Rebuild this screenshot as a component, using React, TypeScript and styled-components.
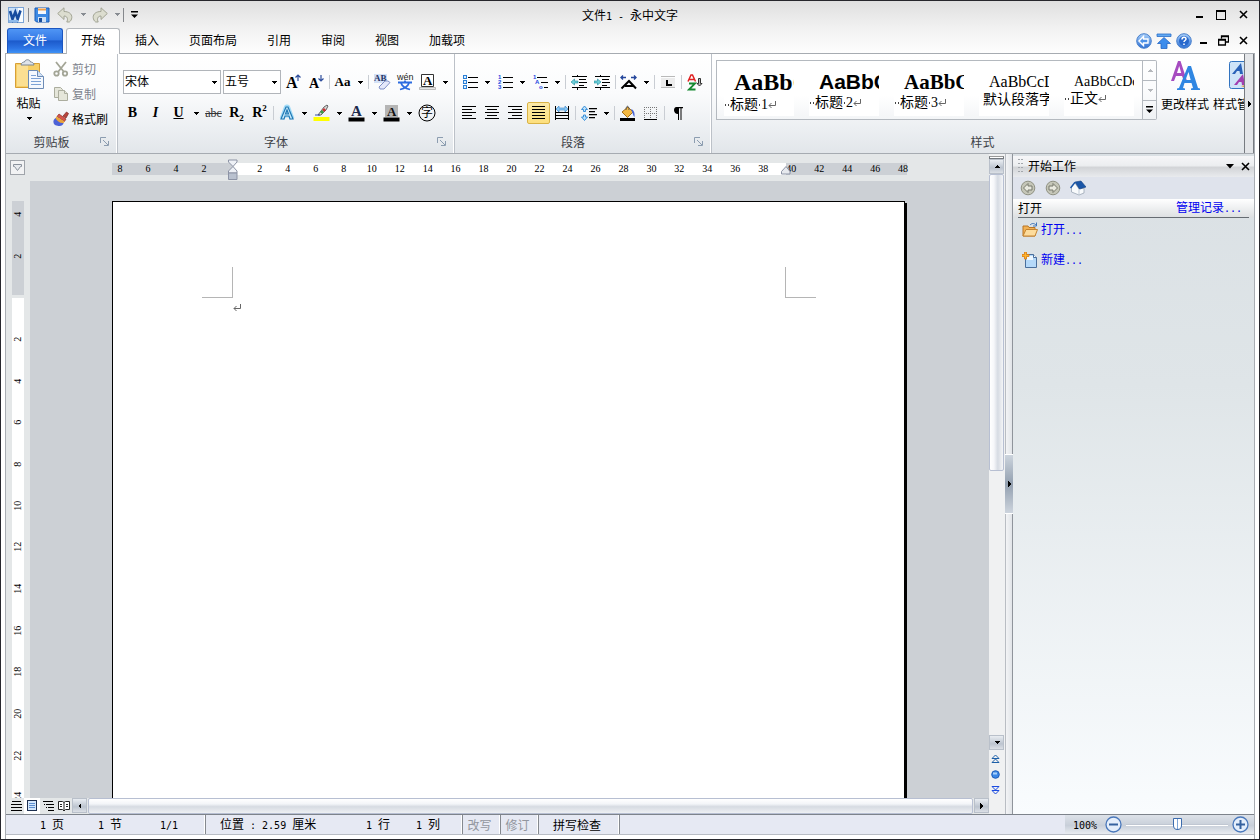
import React from "react";
import styled, { createGlobalStyle, css } from "styled-components";

const GlobalStyle = createGlobalStyle`
  *, *::before, *::after { box-sizing: border-box; }
  body { margin: 0; overflow: hidden; }
  body, button, select, input {
    font-family: "Noto Sans CJK SC", "Liberation Sans", sans-serif;
    font-size: 12px;
    line-height: 16px;
    color: #000;
  }
  button { background: none; border: 0; padding: 0; margin: 0; }
  svg { display: block; flex: none; }
`;

const serif = `"Liberation Serif", "Noto Sans CJK SC", serif`;

/* ---------- shared parts ---------- */

const Latin = styled.span`
  font-family: "DejaVu Sans Mono", monospace;
  font-size: 10px;
  white-space: pre;
`;

function Mixed({ text }: { text: string }) {
  return (
    <>
      {text.split(/([\x20-\x7e]+)/).map((run, i) => (i % 2 ? <Latin key={i}>{run}</Latin> : run))}
    </>
  );
}

const Frame = styled.div`
  display: flex;
  flex-direction: column;
  height: 100vh;
  border: 1px solid #26262c;
  background: linear-gradient(#dfdfdf 0, #f2f2f2 28px, #fefefe 52px, #fff 53px);
`;

const IconButton = styled.button<{ $w?: number; $h?: number }>`
  display: flex;
  align-items: center;
  justify-content: center;
  flex: none;
  width: ${(p) => p.$w ?? 20}px;
  height: ${(p) => p.$h ?? 20}px;
`;

function Caret({ fill = "#000", dir = "down" }: { fill?: string; dir?: "down" | "up" | "left" | "right" }) {
  const d = { down: "M0 1h6L3 4z", up: "M0 4h6L3 1z", left: "M4 0v6L1 3z", right: "M1 0v6l3-3z" }[dir];
  const vertical = dir === "down" || dir === "up";
  return (
    <svg width={vertical ? 6 : 5} height={vertical ? 5 : 6} shapeRendering="crispEdges">
      <path d={d} fill={fill} />
    </svg>
  );
}

const Cross = () => (
  <svg width="9" height="9" fill="none" stroke="#000" strokeWidth="1.6">
    <path d="M1 1l7 7M8 1L1 8" />
  </svg>
);
const Minimize = () => (
  <svg width="9" height="9">
    <path d="M1 6h7v2H1z" />
  </svg>
);

/* ---------- title bar ---------- */

const TitleBar = styled.header`
  display: grid;
  grid-template-columns: 1fr auto 1fr;
  align-items: center;
  height: 27px;
  flex: none;
  padding: 0 5px;
`;
const QuickAccess = styled.div`
  display: flex;
  align-items: center;
`;
const QuickSep = styled.span`
  width: 1px;
  height: 14px;
  margin: 0 4px 0 2px;
  background: #85888c;
`;
const WindowTitle = styled.h1`
  margin: 0;
  padding-top: 2px;
  font-size: 12px;
  font-weight: 400;
`;
const WindowButtons = styled.div`
  display: flex;
  align-items: center;
  justify-content: flex-end;
  margin-left: auto;
`;

const WordLogo = () => (
  <svg width="16" height="16">
    <rect x=".5" y=".5" width="15" height="15" fill="#c9e0f8" stroke="#7ba4d6" />
    <path d="M10 1h5v14h-5z" fill="#f8fcff" />
    <path d="M2 4l2.500 8 2.800-7 2.400 7L12.500 3.500" fill="none" stroke="#164c9f" strokeWidth="2.600" />
    <path d="M1 13h9v2H1z" fill="#8fbaea" />
  </svg>
);
const SaveIcon = () => (
  <svg width="16" height="16">
    <path d="M1 1h14v14H2.500L1 13.500z" fill="#3d8ae4" stroke="#1b5bb4" />
    <path d="M4 1h8v6H4z" fill="#f4f8fd" />
    <path d="M4 1.500h8v2H4z" fill="#f0a04a" />
    <path d="M4 10h8v5H4z" fill="#cfe0f4" />
    <path d="M5 11h3v4H5z" fill="#1b4f9c" />
  </svg>
);
const UndoIcon = ({ flip }: { flip?: boolean }) => (
  <svg width="16" height="16">
    <path
      transform={flip ? "translate(16 0) scale(-1 1)" : undefined}
      d="M.7 6.500L7 .8V4.500c5 0 8 2.500 7.800 6-.2 2-1 3.500-2.500 4.500h-2.500c1.500-3 .5-6-2.800-6v3.500z"
      fill="#dcddcf"
      stroke="#a2a494"
    />
  </svg>
);
const CustomizeIcon = () => (
  <svg width="9" height="8">
    <path d="M1 0h7v1.500H1zM1 3.500h7L4.500 7z" />
  </svg>
);

/* ---------- tabs ---------- */

const TabRow = styled.nav`
  display: flex;
  height: 25px;
  flex: none;
  padding: 0 6px;
`;
const Tab = styled.button<{ $active?: boolean }>`
  height: 26px;
  padding: 0 15px 3px;
  white-space: nowrap;
  ${(p) =>
    p.$active &&
    css`
      position: relative;
      z-index: 1;
      padding: 0 14px 3px;
      border: 1px solid #b4b8bd;
      border-bottom: 0;
      border-radius: 3px 3px 0 0;
      background: #fff;
    `}
`;
const FileTab = styled.button`
  width: 56px;
  height: 25px;
  margin-right: 3px;
  padding-bottom: 2px;
  color: #fff;
  border: 1px solid #1c56c0;
  border-bottom: 0;
  border-radius: 3px 3px 0 0;
  background: linear-gradient(#4f95f4, #3479e6 45%, #1c5acb 50%, #2c74e4 80%, #3f92f6);
`;
const TabTools = styled(WindowButtons)`
  height: 25px;
`;

const BlueDisc = ({ children }: { children: React.ReactNode }) => (
  <svg width="16" height="16">
    <defs>
      <linearGradient id="disc" x2="0" y2="1">
        <stop stopColor="#a9d0fa" />
        <stop offset="1" stopColor="#2c6fd4" />
      </linearGradient>
    </defs>
    <circle cx="8" cy="8" r="7.300" fill="url(#disc)" stroke="#4a80cc" />
    {children}
  </svg>
);
const BackGlyph = () => <path d="M3 8l4.500-4.500V6H12v4H7.500v2.500z" fill="#4d92e8" stroke="#fff" strokeWidth="1.400" />;

/* ---------- ribbon ---------- */

const Workspace = styled.div`
  display: flex;
  flex-direction: column;
  flex: 1;
  min-height: 0;
  margin: 0 4px;
  border: solid #a9adb3;
  border-width: 0 1px;
`;
const Ribbon = styled.section`
  display: flex;
  flex: none;
  height: 101px;
  border: solid #a6abb1;
  border-width: 1px 0;
  background: linear-gradient(#fff, #fafbfc 40%, #eceff2 75%, #e2e6ea);
`;
const RibbonGroups = styled.div`
  display: flex;
  flex: 1;
  min-width: 0;
  overflow: hidden;
`;
const Group = styled.section<{ $w: number; $grow?: boolean }>`
  display: grid;
  grid-template-rows: 1fr 20px;
  flex: ${(p) => (p.$grow ? 1 : 0)} 0 ${(p) => p.$w}px;
  border-right: 1px solid #bcc1c8;
  box-shadow: inset -1px 0 #fff;
`;
const GroupFooter = styled.div`
  display: grid;
  grid-template-columns: 1fr 20px;
  align-items: center;
  text-align: center;
  color: #3d4147;
  padding-bottom: 3px;
`;

const Launcher = () => (
  <IconButton aria-label="更多选项" $w={14} $h={14}>
    <svg width="9" height="9" fill="none" stroke="#8c9db0">
      <path d="M.5 6V.5H6M3 3l5 5M8.500 4v4.500H4" />
    </svg>
  </IconButton>
);

const Clipboard = styled.div`
  display: flex;
  padding: 5px 0 0 7px;
`;
const TallButton = styled.button<{ $w: number }>`
  display: flex;
  flex-direction: column;
  align-items: center;
  flex: none;
  gap: 5px;
  width: ${(p) => p.$w}px;
  height: 66px;
  white-space: nowrap;
`;
const SmallList = styled.div`
  display: flex;
  flex-direction: column;
  gap: 5px;
  margin-left: 9px;
`;
const SmallButton = styled.button`
  display: flex;
  align-items: center;
  gap: 3px;
  height: 20px;
  padding-bottom: 1px;
  white-space: nowrap;
  &:disabled { color: #7d838c; }
`;

const PasteIcon = () => (
  <svg width="30" height="31">
    <path d="M1.500 4.500h24v24h-24z" fill="#f7cf66" stroke="#d79f36" />
    <path d="M3 6h11v21H3z" fill="#fbdf92" />
    <path d="M7 6c0-2 2-3 3.500-3 .5-3 5.500-3 6 0C18 3 20 4 20 6z" fill="#dfe4ea" stroke="#7d8794" />
    <path d="M14.500 11.500h9l6 6v12h-15z" fill="#f5f9fe" stroke="#6d8cb6" />
    <path d="M23.500 11.500v6h6" fill="#d2e2f5" stroke="#6d8cb6" />
    <path d="M17 16.500h5M17 19.500h10M17 22.500h10M17 25.500h10" stroke="#7da3d6" />
  </svg>
);
const CutIcon = () => (
  <svg width="16" height="16" fill="none" stroke="#a3a596" strokeWidth="1.800">
    <path d="M3 1l8 10M13 1L5 11" />
    <circle cx="3.500" cy="12.500" r="2.200" />
    <circle cx="12" cy="12.500" r="2.200" />
  </svg>
);
const CopyIcon = () => (
  <svg width="16" height="16" fill="#e5e6da" stroke="#abad9e">
    <path d="M1.500 1.500h6l2 2v8h-8z" />
    <path d="M5.500 4.500h6l3 3v7h-9z" />
    <path d="M11.500 4.500v3h3" />
  </svg>
);
const BrushIcon = () => (
  <svg width="16" height="16">
    <path d="M10 5l3.500-4 2 1.500L13 7z" fill="#b8443c" stroke="#7d2622" strokeWidth=".7" />
    <path d="M6 3l7 5-1.500 2.500L4 5.500z" fill="#d8554a" stroke="#8c2f28" strokeWidth=".7" />
    <path d="M3.500 5.500l8 5c-1 2.500-3 3-5 2.500L2 8z" fill="#e9a33c" />
    <path d="M2.500 7C1 8.500 0 9.500.5 11.500.5 14 4 15 6.500 15c2.500 0 4-1.500 4-3C7 12.500 4 10 2.500 7z" fill="#4d62d6" />
  </svg>
);

const ToolRows = styled.div`
  display: flex;
  flex-direction: column;
  gap: 7px;
  padding: 16px 0 0 3px;
`;
const ToolRow = styled.div`
  display: flex;
  align-items: center;
  height: 24px;
`;
const Tool = styled.button<{ $on?: boolean }>`
  display: flex;
  align-items: center;
  justify-content: center;
  flex: none;
  width: 23px;
  height: 22px;
  font: 700 16px/20px ${serif};
  ${(p) =>
    p.$on &&
    css`
      border: 1px solid #d9b347;
      border-radius: 2px;
      background: linear-gradient(#fbe9a8, #fddf7d);
    `}
`;
const Glyph = styled.span<{ $size?: number; $italic?: boolean; $line?: string }>`
  font-size: ${(p) => p.$size ?? 16}px;
  font-style: ${(p) => (p.$italic ? "italic" : "normal")};
  text-decoration: ${(p) => p.$line ?? "none"};
  sub, sup { font-size: 9px; line-height: 0; }
`;
const Struck = styled(Glyph)`
  color: #333;
  font-weight: 400;
`;
const DropArrow = styled.button`
  display: flex;
  align-items: center;
  justify-content: center;
  flex: none;
  width: 12px;
  height: 22px;
`;
const ToolSep = styled.span`
  width: 1px;
  height: 14px;
  margin: 0 1px 0 2px;
  background: #c9cdd3;
`;
const Drop = () => (
  <DropArrow aria-label="下拉">
    <Caret />
  </DropArrow>
);

const Combos = styled.div`
  display: flex;
  gap: 2px;
  margin-left: 2px;
`;
const ComboBox = styled.label<{ $w: number }>`
  position: relative;
  width: ${(p) => p.$w}px;
  svg {
    position: absolute;
    right: 4px;
    top: 10px;
    pointer-events: none;
  }
`;
const Select = styled.select`
  width: 100%;
  height: 24px;
  padding: 0 1px 2px;
  border: 1px solid #b1b5ba;
  border-radius: 0;
  background: #fff;
  appearance: none;
`;

const GrowIcon = ({ down }: { down?: boolean }) => (
  <svg width="17" height="18">
    <text x="2" y="15" fontFamily="Liberation Serif, serif" fontWeight="700" fontSize={down ? 14 : 16}>A</text>
    <path d={down ? "M14 2v6M11.500 5.500L14 8l2.500-2.500" : "M14 8V2M11.500 4.500L14 2l2.500 2.500"} fill="none" stroke="#2e4d9c" strokeWidth="1.200" />
  </svg>
);
const ClearIcon = () => (
  <svg width="18" height="18">
    <path d="M1 1h13v9H1z" fill="#d4e1f6" />
    <text x="1" y="8" fontFamily="Liberation Serif, serif" fontWeight="700" fontSize="9" fill="#1f3566">AB</text>
    <path d="M6 14l6-6h3l2 1.500-6 6.500H7z" fill="#e4e8fa" stroke="#7f8fc6" />
  </svg>
);
const PinyinIcon = () => (
  <svg width="18" height="18">
    <text x="1" y="7" fontFamily="Liberation Sans, sans-serif" fontWeight="400" fontSize="9" fill="#222">wén</text>
    <path d="M2 9.500h14M9 7.500v2M5 10c1 3 5 5.500 9 6.500M13 10c-1 3-5 5.500-9 6.500" fill="none" stroke="#2b6be0" strokeWidth="1.800" />
  </svg>
);
const CharBorderIcon = () => (
  <svg width="17" height="18">
    <path d="M2.500 1.500h12v12h-12z" fill="#fff" stroke="#333" />
    <text x="4" y="12" fontFamily="Liberation Serif, serif" fontWeight="700" fontSize="13">A</text>
    <path d="M.5 14.500h16v2H.5z" fill="#e6e6e6" stroke="#999" strokeWidth=".6" />
  </svg>
);
const EffectIcon = () => (
  <svg width="18" height="18" fill="none">
    <path d="M4 15L8.500 3h1L14 15M6 11h6" stroke="#a3dcf8" strokeWidth="5" strokeLinejoin="round" />
    <path d="M3 15L8 3h2l5 12h-3l-1-3H7l-1 3zM7.500 10h3L9 6z" fill="#c8ebfb" stroke="#2078b4" strokeWidth="1.200" />
  </svg>
);
const HighlightIcon = () => (
  <svg width="17" height="18">
    <path d="M5 11l6-8 3-2 1 1-2 4-5 5z" fill="#d8d8d8" stroke="#444" strokeWidth=".8" />
    <path d="M9 6l2-2 2 2-2 2z" fill="#c33" />
    <path d="M7 8l2-2 2 2-2 2z" fill="#3a9c4a" />
    <path d="M2 11h5" stroke="#3551a8" />
    <path d="M.5 13h16v4H.5z" fill="#ff0" />
  </svg>
);
const FontColorIcon = ({ shade }: { shade?: boolean }) => (
  <svg width="17" height="18">
    {shade && <path d="M2 1h13v12H2z" fill="#b5b5b5" />}
    <text x={shade ? 4 : 3} y="12" fontFamily="Liberation Serif, serif" fontWeight="700" fontSize={shade ? 13 : 15} fill={shade ? "#111" : "#1c2a4c"}>A</text>
    <path d="M.5 13.500h16v4H.5z" />
  </svg>
);
const EncloseIcon = () => (
  <svg width="18" height="18">
    <circle cx="9" cy="9" r="8" fill="none" stroke="#000" />
    <text x="3" y="13" fontFamily="Noto Sans CJK SC, sans-serif" fontWeight="400" fontSize="12">字</text>
  </svg>
);

const BulletsIcon = () => (
  <svg width="16" height="16" shapeRendering="crispEdges">
    <path d="M1.500 1.500h3v3h-3zM1.500 6.500h3v3h-3zM1.500 11.500h3v3h-3z" fill="#dff0ff" stroke="#2a7fd6" />
    <path d="M6 3.500h10M6 8.500h10M6 13.500h10" stroke="#000" />
  </svg>
);
const NumbersIcon = () => (
  <svg width="16" height="16">
    <g fontFamily="Liberation Sans, sans-serif" fontSize="6" fontWeight="700" fill="#1845e0">
      <text x="1" y="5">1</text>
      <text x="1" y="10">2</text>
      <text x="1" y="15">3</text>
    </g>
    <path d="M6 3.500h10M6 8.500h10M6 13.500h10" stroke="#000" shapeRendering="crispEdges" />
  </svg>
);
const MultiLevelIcon = () => (
  <svg width="16" height="16">
    <g fontFamily="Liberation Sans, sans-serif" fontSize="6" fontWeight="700" fill="#1845e0">
      <text x="1" y="5">1</text>
      <text x="3" y="10">A</text>
      <text x="7" y="15">o</text>
    </g>
    <path d="M5 3.500h10M9 8.500h7M12 13.500h4" stroke="#000" shapeRendering="crispEdges" />
  </svg>
);
const IndentIcon = ({ inward }: { inward?: boolean }) => (
  <svg width="16" height="16" shapeRendering="crispEdges">
    <path d="M1 2.500h15M8 5.500h7M8 8.500h8M8 11.500h5M1 13.500h15M6.500 1v2M6.500 13v3" stroke="#000" fill="none" />
    <path d={inward ? "M7 8L3.500 5v2H0v2h3.500v2z" : "M0 8l3.500-3v2H7v2H3.500v2z"} fill="#6fd0da" stroke="#1b8a9c" strokeWidth=".6" shapeRendering="auto" />
  </svg>
);
const ScaleIcon = () => (
  <svg width="17" height="16" fill="none">
    <path d="M1.500 14.500L9 7l7 7.500M5 12h8" stroke="#000" strokeWidth="2" />
    <path d="M1 3.500h5M3 1.500L1 3.500l2 2M16 3.500h-5M14 1.500l2 2-2 2" stroke="#26479c" strokeWidth="1.400" />
  </svg>
);
const TabStopIcon = () => (
  <svg width="16" height="16">
    <path d="M1 4h14v9H1z" fill="#ececec" />
    <path d="M1 2.500h14M1 13.500h14" stroke="#b9b9b9" />
    <path d="M6 6h2v4h4v2H6z" />
  </svg>
);
const SortIcon = () => (
  <svg width="16" height="17" fill="none">
    <path d="M1 7.500L4 1h1.500l3 6.500M2.500 5.500H7" stroke="#e02020" strokeWidth="1.500" />
    <path d="M2 9.500h6L2 15.500h6.500" stroke="#178a32" strokeWidth="1.800" />
    <path d="M11.500 4.500h2v5H15L12.500 12 10 9.500h1.500z" fill="#bbb" stroke="#333" />
  </svg>
);
const AlignIcon = ({ lines }: { lines: [number, number][] }) => (
  <svg width="15" height="16" shapeRendering="crispEdges">
    {lines.map(([x, w], i) => (
      <path key={i} d={`M${x} ${i * 3 + 1}h${w}v1h-${w}z`} />
    ))}
  </svg>
);
const DistributeIcon = () => (
  <svg width="16" height="16" shapeRendering="crispEdges">
    <path d="M1 1h1v14H1zM14 1h1v14h-1z" />
    <path d="M2 7h12v1H2zM2 10h12v1H2zM2 13h12v1H2z" />
    <path d="M2 4l3-3v2h6V1l3 3-3 3V5H5v2z" fill="#8cc9f5" stroke="#2d7fc9" strokeWidth=".6" shapeRendering="auto" />
  </svg>
);
const SpacingIcon = () => (
  <svg width="16" height="16">
    <path d="M3.500 1L6.500 4.500h-2v2h-2v-2h-2zM3.500 15.500L.5 12h2V10h2v2h2z" fill="#bfe3fb" stroke="#2a87d6" strokeWidth=".9" />
    <path d="M8 3h8v1.300H8zM8 6h6v1.300H8zM8 9h8v1.300H8zM8 12h6v1.300H8z" />
  </svg>
);
const BucketIcon = () => (
  <svg width="16" height="17">
    <path d="M2 7l6-5 5 5-5.500 5.500z" fill="#f4b942" stroke="#a6701a" />
    <path d="M6 5c0-5 3-5 3 0" fill="none" stroke="#555" />
    <path d="M11 4c3 1 4 4 3.500 8-1-1-1.500-2.500-2-4z" fill="#4a68d8" />
    <path d="M0 13h15v3H0z" />
  </svg>
);
const BordersIcon = () => (
  <svg width="15" height="15" shapeRendering="crispEdges" fill="none" stroke="#777">
    <path strokeDasharray="1 1" d="M1 1.500h13M1 7.500h13M1.500 1v12M7.500 1v12M13.500 1v12" />
    <path d="M1 13.500h13" stroke="#000" />
  </svg>
);
const PilcrowIcon = () => (
  <svg width="12" height="15">
    <path d="M4.500 1H11v1.300H9.500V14H8.500V2.300H7V14H6V8C1 8 1 1 4.500 1z" />
  </svg>
);

const StylesBody = styled.div`
  display: flex;
  padding: 6px 0 0 4px;
`;
const Gallery = styled.div`
  display: flex;
  gap: 15px;
  flex: 1 0 427px;
  height: 60px;
  padding: 0 8px 3px 7px;
  border: 1px solid #b4b9bf;
  background: linear-gradient(#fff 60%, #f3f5f7);
`;
const StyleCard = styled.button`
  display: flex;
  flex-direction: column;
  justify-content: flex-start;
  width: 70px;
  flex: none;
  overflow: hidden;
  text-align: left;
  white-space: nowrap;
  background: #fff;
`;
const Sample = styled.span<{ $size: number; $h: number; $sans?: boolean; $bold?: boolean }>`
  display: block;
  flex: none;
  height: ${(p) => p.$h}px;
  padding-left: 10px;
  font-family: ${(p) => (p.$sans ? `"Liberation Sans", sans-serif` : serif)};
  font-size: ${(p) => p.$size}px;
  font-weight: ${(p) => (p.$bold ? 700 : 400)};
  line-height: 42px;
`;
const StyleName = styled.span`
  display: flex;
  align-items: center;
  flex: none;
  height: 16px;
  font: 14px/16px ${serif};
`;
const Dot = styled.i`
  width: 1px;
  height: 2px;
  margin: 0 1px;
  background: #444;
`;
const GalleryScroll = styled.div`
  display: grid;
  grid-template-rows: repeat(3, 1fr);
  width: 14px;
  flex: none;
  height: 60px;
  border: 1px solid #b4b9bf;
  border-left: 0;
  border-radius: 0 2px 2px 0;
`;
const GalleryStep = styled.button`
  display: grid;
  place-items: center;
  & + & { border-top: 1px solid #b4b9bf; }
`;
const RibbonScroller = styled.button`
  display: flex;
  align-items: center;
  justify-content: center;
  width: 10px;
  border: 1px solid #777b81;
  border-width: 0 1px;
  background: #e4e6e9;
`;

const ReturnMark = () => (
  <svg width="8" height="8" fill="none" stroke="#666">
    <path d="M7.500 0v4.500H1M3.500 2L1 4.500 3.500 7" />
  </svg>
);
const ChangeStylesIcon = () => (
  <svg width="31" height="31">
    <path d="M1 21h3l2-5h6l2 5h3L10.500 1H8zM7 13l2.200-7 2 7z" fill="#a64cc0" />
    <path d="M7 30v-1.500l2-.5L18 6h3l7 22 2 .5V30h-9v-1.500l2-.5-1.500-5h-7L13 28l2 .5V30zM15.500 20h5.200L18.500 12z" fill="#2f86e2" />
  </svg>
);
const StyleManagerIcon = () => (
  <svg width="28" height="31">
    <rect x=".5" y="1.500" width="27" height="27" rx="2" fill="#cfe4f8" stroke="#3173c0" />
    <path d="M3 14L12 3l2 11h-3l-.5-3H8l-2 3z" fill="#2a62b8" />
    <path d="M5 25l9-11 2 11h-3l-.5-3H10l-2 3z" fill="#a240b0" />
    <path d="M12 26l9-2-2 5z" fill="#e39a4c" />
  </svg>
);

/* ---------- editor ---------- */

const Body = styled.main`
  display: flex;
  flex: 1;
  min-height: 0;
`;
const Editor = styled.section`
  display: grid;
  grid-template-rows: 27px minmax(0, 1fr) 16px;
  flex: 1;
  min-width: 0;
  background: #e4e7e8;
`;
const RulerRow = styled.div`
  display: grid;
  grid-template-columns: 24px 1fr;
  align-items: center;
`;
const RulerCorner = styled.button`
  display: grid;
  place-items: center;
  width: 15px;
  height: 15px;
  margin-left: 4px;
  border: 1px solid #9fa4aa;
  background: #f2f3f4;
`;
const Ruler = styled.div`
  position: relative;
  width: 795px;
  height: 12px;
  margin: 2px auto 0;
  background: linear-gradient(90deg, #ccd0d5 121px, #fff 121px, #fff 674px, #ccd0d5 674px);
`;
const RulerTicks = styled.div`
  display: flex;
  margin: 0 -10px 0 -6px;
  font: 10px/12px "Liberation Serif", serif;
  text-align: center;
  span { flex: 1; }
`;
const RulerMarker = styled.svg<{ $x: number; $y: number }>`
  position: absolute;
  left: ${(p) => p.$x}px;
  top: ${(p) => p.$y}px;
`;
const PageRow = styled.div`
  display: grid;
  grid-template-columns: 24px 1fr;
  grid-template-rows: minmax(0, 1fr);
  min-height: 0;
`;
const VerticalRuler = styled.div`
  width: 12px;
  margin-left: 6px;
  padding-top: 12px;
  overflow: hidden;
  background: linear-gradient(#e4e7e8 20px, #ccd0d5 20px, #ccd0d5 114px, #e4e7e8 114px, #e4e7e8 117px, #fff 117px);
`;
const VerticalTicks = styled.div`
  display: flex;
  flex-direction: column;
  height: 625px;
  span {
    display: flex;
    align-items: center;
    justify-content: center;
    flex: 1;
    writing-mode: vertical-rl;
    rotate: 180deg;
    font: 10px/12px "Liberation Serif", serif;
  }
`;
const Canvas = styled.div`
  display: flex;
  justify-content: center;
  overflow: hidden;
  background: #ccd0d5;
`;
const Page = styled.article`
  flex: none;
  width: 793px;
  height: 1123px;
  margin: 20px 2px 0 0;
  padding: 65px 88px 0 89px;
  border: 1px solid #000;
  background: #fff;
  box-shadow: 2px 2px #000;
`;
const CropMarks = styled.div`
  display: flex;
  justify-content: space-between;
`;
const CropMark = styled.i<{ $right?: boolean }>`
  width: 31px;
  height: 31px;
  border-bottom: 1px solid #b5b5b5;
  border-left: ${(p) => (p.$right ? "1px solid #b5b5b5" : "0")};
  border-right: ${(p) => (p.$right ? "0" : "1px solid #b5b5b5")};
`;
const Paragraph = styled.p`
  margin: 6px 31px 0;
`;

const BottomRow = styled.div`
  display: flex;
  align-items: stretch;
  min-width: 0;
`;
const ViewButtons = styled.div`
  display: flex;
  padding-left: 2px;
`;
const ViewButton = styled.button<{ $on?: boolean }>`
  display: grid;
  place-items: center;
  width: 16px;
  height: 16px;
  background: ${(p) => (p.$on ? "#fff" : "none")};
`;
const BarButton = styled.button`
  display: grid;
  place-items: center;
  flex: none;
  width: 15px;
  height: 15px;
  border: 1px solid #b9c0ca;
  background: linear-gradient(#e9edf2, #bcc4cf 60%, #dce0e6);
`;
const HorizontalThumb = styled.div`
  flex: 1;
  margin: 0 1px;
  border: 1px solid #b7bfd2;
  border-radius: 2px;
  background: linear-gradient(#fff, #f3f5f8 35%, #d6dbe2 55%, #eef0f3);
`;
const VerticalBar = styled.div`
  display: flex;
  flex-direction: column;
  width: 16px;
  flex: none;
  padding: 2px 1px 16px 0;
  background: #f0f1f2;
`;
const SplitHandle = styled.div`
  height: 3px;
  border: 1px solid #74797f;
  border-top-color: #999;
  background: #fff;
`;
const VerticalThumb = styled.div`
  flex: 296 0 0;
  border: 1px solid #b7bfd2;
  border-radius: 2px;
  background: linear-gradient(90deg, #fff, #f6f7fa 30%, #d6dbe3 60%, #f4f5f7);
`;
const VerticalTrack = styled.div`
  flex: 264 0 0;
`;
const BrowseButton = styled.button`
  display: grid;
  place-items: center;
  width: 13px;
  height: 16px;
`;

/* ---------- task pane ---------- */

const Splitter = styled.div`
  display: flex;
  align-items: center;
  width: 8px;
  flex: none;
  background: linear-gradient(90deg, #b9bdc3 1px, #f3f4f6 1px, #e1e4e8 7px, #8f949b 7px);
`;
const SplitterGrip = styled.button`
  display: grid;
  place-items: center;
  width: 8px;
  height: 60px;
  border: solid #fff;
  border-width: 1px 0;
  background: linear-gradient(#ccd4dd, #93a0b0 50%, #cdd4dd);
`;
const Pane = styled.aside`
  display: flex;
  flex-direction: column;
  flex: 0 0 241px;
  padding-top: 2px;
  background: linear-gradient(#dae0e4, #dfe5e8 35%, #f9fcfe);
`;
const PaneTitle = styled.header`
  display: flex;
  align-items: center;
  height: 21px;
  padding: 0 2px 1px 4px;
  background: linear-gradient(#f6f6f8, #eceef0 45%, #d2d4d7 55%, #e9ebee);
`;
const PaneHeading = styled.h2`
  flex: 1;
  margin: 0 0 0 5px;
  padding-bottom: 1px;
  font-size: 12px;
  font-weight: 400;
`;
const PaneTools = styled.div`
  display: flex;
  align-items: center;
  gap: 9px;
  height: 22px;
  padding-left: 7px;
  background: #dfe3ec;
`;
const PaneSection = styled.div`
  display: flex;
  justify-content: space-between;
  align-items: center;
  height: 19px;
  margin-right: 5px;
  padding: 0 7px 0 0;
  border-bottom: 1px solid #666c72;
`;
const PaneSectionBack = styled.div`
  padding-left: 5px;
  background: linear-gradient(#fff, #dcdfe1);
`;
const PaneLink = styled.a`
  display: flex;
  align-items: center;
  gap: 3px;
  height: 18px;
  color: #0000f0;
  text-decoration: none;
`;
const PaneLinks = styled.div`
  display: flex;
  flex-direction: column;
  gap: 12px;
  padding: 3px 0 0 9px;
`;

const GripDots = () => (
  <svg width="6" height="16" fill="#a3a7ac">
    {[1, 5, 9, 13].map((y) => (
      <path key={y} d={`M1 ${y}h2v1H1zM4 ${y}h2v1H4z`} />
    ))}
  </svg>
);
const GreyDisc = ({ flip }: { flip?: boolean }) => (
  <svg width="16" height="16">
    <circle cx="8" cy="8" r="6.800" fill="#c5c6b8" stroke="#909284" />
    <path transform={flip ? "translate(16 0) scale(-1 1)" : undefined} d="M3.500 8L8 3.500V6h4v4H8v2.500z" fill="#e9e9df" stroke="#77796c" />
  </svg>
);
const HomeIcon = () => (
  <svg width="16" height="16">
    <path d="M1.500 7L5 3l4 6 5-1v5l-5 2-7.500-3z" fill="#f8fafc" stroke="#9aa6b4" strokeWidth=".8" />
    <path d="M5 2l6-1 5 6-6.500 2z" fill="#1a56a8" stroke="#12407f" strokeWidth=".6" />
    <path d="M.5 8L5 2.200" stroke="#1a56a8" strokeWidth="1.400" />
    <path d="M9 9v5.500" stroke="#c2ccd8" />
  </svg>
);
const FolderIcon = () => (
  <svg width="16" height="16">
    <path d="M1 14V4h5l1 1.500h6V14z" fill="#f2b254" stroke="#b87524" />
    <path d="M1 14l3-6.500h11.500L13 14z" fill="#fddc9c" stroke="#c58430" />
    <path d="M8 3c2-2 4-2 6 0M14.500.5V4H11" fill="none" stroke="#3d74b8" />
  </svg>
);
const NewDocIcon = () => (
  <svg width="16" height="16">
    <path d="M3.500 2.500h8l3 3v10h-11z" fill="#b5d9f9" stroke="#4a6f9c" />
    <path d="M5 4h6v4H5z" fill="#edf7ff" />
    <path d="M11.500 2.500v3h3" fill="#fff" stroke="#4a6f9c" />
    <path d="M2.500 0h2v2.500H7v2H4.500V7h-2V4.500H0v-2h2.500z" fill="#ffb52c" stroke="#d9780c" strokeWidth=".8" />
  </svg>
);

/* ---------- status bar ---------- */

const StatusBar = styled.footer`
  display: flex;
  flex: none;
  height: 21px;
  margin-bottom: 4px;
  border: solid #7d838b;
  border-width: 1px 0;
  border-bottom-color: #b9bdc5;
  background: #e6e9f3;
`;
const StatusCell = styled.div<{ $w?: number; $muted?: boolean }>`
  display: flex;
  align-items: center;
  flex: ${(p) => (p.$w ? `0 0 ${p.$w}px` : "1")};
  color: ${(p) => (p.$muted ? "#92969e" : "#000")};
  border-right: ${(p) => (p.$w ? "1px solid #85898f" : "0")};
  box-shadow: ${(p) => (p.$w ? "inset -1px 0 #fff" : "none")};
  white-space: nowrap;
`;
const StatusField = styled.span<{ $w?: number }>`
  width: ${(p) => (p.$w ? `${p.$w}px` : "auto")};
`;
const Counters = styled(StatusCell)`
  padding-left: 34px;
`;
const Position = styled(StatusCell)`
  padding-left: 14px;
`;
const Centered = styled(StatusCell)`
  justify-content: center;
  padding-right: 4px;
`;
const Zoom = styled.div`
  display: flex;
  align-items: center;
  flex: 0 0 189px;
  min-width: 0;
  padding: 0 5px 0 8px;
  background: linear-gradient(#dde2e9, #c8cfd9 55%, #e9ecf1);
`;
const ZoomValue = styled.output`
  width: 32px;
  flex: none;
`;
const ZoomSlider = styled.input`
  flex: 1;
  width: 0;
  min-width: 0;
  height: 16px;
  margin: 0 4px;
  appearance: none;
  background: none;
  &::-webkit-slider-runnable-track {
    height: 2px;
    background: #fff;
    border-top: 1px solid #c0c7d2;
  }
  &::-webkit-slider-thumb {
    appearance: none;
    width: 9px;
    height: 12px;
    margin-top: -7px;
    border: 1px solid #3c6cae;
    border-radius: 1px 1px 5px 5px;
    background: linear-gradient(90deg, #fff 3px, #7fa6d8 3px, #7fa6d8 4px, #fff 4px);
  }
`;
const ZoomIcon = ({ plus }: { plus?: boolean }) => (
  <svg width="17" height="17">
    <circle cx="8.500" cy="8.500" r="7.500" fill="#e4eefb" stroke="#4a78bb" strokeWidth="1.300" />
    <path d={plus ? "M4 7.500h3.500V4h2v3.500H13v2H9.500V13h-2V9.500H4z" : "M4 7.500h9v2H4z"} fill="#36629f" />
  </svg>
);

/* ---------- data ---------- */

const tabs = ["开始", "插入", "页面布局", "引用", "审阅", "视图", "加载项"];

const styleCards = [
  { sample: "AaBbC", name: "标题", no: "1", size: 24, h: 36, bold: true },
  { sample: "AaBbC", name: "标题", no: "2", size: 21, h: 34, bold: true, sans: true },
  { sample: "AaBbC", name: "标题", no: "3", size: 21, h: 34, bold: true },
  { sample: "AaBbCcD", name: "默认段落字", size: 16, h: 31 },
  { sample: "AaBbCcDd", name: "正文", size: 14, h: 30, mark: true },
];

const alignments: { label: string; on?: boolean; lines: [number, number][] }[] = [
  { label: "左对齐", lines: [[0, 14], [0, 10], [0, 14], [0, 10], [0, 14]] },
  { label: "居中", lines: [[0, 14], [2, 10], [0, 14], [2, 10], [0, 14]] },
  { label: "右对齐", lines: [[0, 14], [4, 10], [0, 14], [4, 10], [0, 14]] },
  { label: "两端对齐", on: true, lines: [[1, 13], [1, 13], [1, 13], [1, 13], [1, 13]] },
];

const horizontalTicks = Array.from({ length: 29 }, (_, i) => Math.abs(i * 2 - 8));
const verticalTicks = Array.from({ length: 15 }, (_, i) => Math.abs(i * 2 - 4));

export default function App() {
  return (
    <>
      <GlobalStyle />
      <Frame>
        <TitleBar>
          <QuickAccess>
            <IconButton aria-label="永中文字"><WordLogo /></IconButton>
            <QuickSep />
            <IconButton aria-label="保存" $w={18}><SaveIcon /></IconButton>
            <IconButton aria-label="撤销" $w={28}><UndoIcon /></IconButton>
            <IconButton aria-label="撤销列表" $w={8}><Caret fill="#888c92" /></IconButton>
            <IconButton aria-label="恢复" $w={26}><UndoIcon flip /></IconButton>
            <IconButton aria-label="恢复列表" $w={8}><Caret fill="#888c92" /></IconButton>
            <QuickSep />
            <IconButton aria-label="自定义" $w={12}><CustomizeIcon /></IconButton>
          </QuickAccess>
          <WindowTitle><Mixed text="文件1 - 永中文字" /></WindowTitle>
          <WindowButtons>
            <IconButton aria-label="最小化" $w={22}><Minimize /></IconButton>
            <IconButton aria-label="最大化" $w={22}>
              <svg width="10" height="10" fill="none" stroke="#000" shapeRendering="crispEdges">
                <path d="M.5 1h9v8.500h-9z" /><path d="M0 1h10" strokeWidth="2" />
              </svg>
            </IconButton>
            <IconButton aria-label="关闭" $w={22}><Cross /></IconButton>
          </WindowButtons>
        </TitleBar>

        <TabRow>
          <FileTab>文件</FileTab>
          {tabs.map((name, i) => (
            <Tab key={name} $active={i === 0}>{name}</Tab>
          ))}
          <TabTools>
            <IconButton aria-label="后退"><BlueDisc><BackGlyph /></BlueDisc></IconButton>
            <IconButton aria-label="收起功能区">
              <svg width="16" height="16">
                <path d="M1 1h14v2.500H1z" fill="#62aaf4" stroke="#2a6cc8" strokeWidth=".8" />
                <path d="M8 4.500l6.500 6H11V15.500H5v-5H1.500z" fill="#3c8cec" stroke="#2466c4" strokeWidth=".8" />
              </svg>
            </IconButton>
            <IconButton aria-label="帮助">
              <BlueDisc>
                <circle cx="8" cy="8" r="5" fill="#2868cc" />
                <path d="M6 6.500c0-3 4-3 4-.5 0 1.500-2 1.500-2 3M8 10.500v1.500" fill="none" stroke="#fff" strokeWidth="1.500" />
              </BlueDisc>
            </IconButton>
            <IconButton aria-label="最小化文档" $w={19}><Minimize /></IconButton>
            <IconButton aria-label="还原文档">
              <svg width="11" height="11" fill="none" stroke="#000" strokeWidth="1.300">
                <path d="M3.500 3.500V1h7v6H8M3 1.500h8M.6 4.500h6.800v5.500H.6zM.6 5h7" />
              </svg>
            </IconButton>
            <IconButton aria-label="关闭文档"><Cross /></IconButton>
          </TabTools>
        </TabRow>

        <Workspace>
          <Ribbon>
            <RibbonGroups>
              <Group $w={112}>
                <Clipboard>
                  <TallButton $w={31}>
                    <PasteIcon />
                    粘贴
                    <Caret />
                  </TallButton>
                  <SmallList>
                    <SmallButton disabled><CutIcon />剪切</SmallButton>
                    <SmallButton disabled><CopyIcon />复制</SmallButton>
                    <SmallButton><BrushIcon />格式刷</SmallButton>
                  </SmallList>
                </Clipboard>
                <GroupFooter><span>剪贴板</span><Launcher /></GroupFooter>
              </Group>

              <Group $w={337}>
                <ToolRows>
                  <ToolRow>
                    <Combos>
                      <ComboBox $w={98}>
                        <Select aria-label="字体"><option>宋体</option></Select>
                        <Caret />
                      </ComboBox>
                      <ComboBox $w={58}>
                        <Select aria-label="字号"><option>五号</option></Select>
                        <Caret />
                      </ComboBox>
                    </Combos>
                    <Tool aria-label="增大字体"><GrowIcon /></Tool>
                    <Tool aria-label="缩小字体"><GrowIcon down /></Tool>
                    <ToolSep />
                    <Tool><Glyph $size={13}>Aa</Glyph></Tool>
                    <Drop />
                    <ToolSep />
                    <Tool aria-label="清除格式"><ClearIcon /></Tool>
                    <Tool aria-label="拼音指南"><PinyinIcon /></Tool>
                    <Tool aria-label="字符边框"><CharBorderIcon /></Tool>
                    <Drop />
                  </ToolRow>
                  <ToolRow>
                    <Tool><Glyph $size={14}>B</Glyph></Tool>
                    <Tool><Glyph $size={14} $italic>I</Glyph></Tool>
                    <Tool><Glyph $size={14} $line="underline">U</Glyph></Tool>
                    <Drop />
                    <Tool><Struck $size={12} $line="line-through">abc</Struck></Tool>
                    <Tool><Glyph $size={14}>R<sub>2</sub></Glyph></Tool>
                    <Tool><Glyph $size={14}>R<sup>2</sup></Glyph></Tool>
                    <ToolSep />
                    <Tool aria-label="文本效果"><EffectIcon /></Tool>
                    <Drop />
                    <Tool aria-label="突出显示"><HighlightIcon /></Tool>
                    <Drop />
                    <Tool aria-label="字体颜色"><FontColorIcon /></Tool>
                    <Drop />
                    <Tool aria-label="字符底纹"><FontColorIcon shade /></Tool>
                    <Drop />
                    <Tool aria-label="带圈字符"><EncloseIcon /></Tool>
                  </ToolRow>
                </ToolRows>
                <GroupFooter><span>字体</span><Launcher /></GroupFooter>
              </Group>

              <Group $w={257}>
                <ToolRows>
                  <ToolRow>
                    <Tool aria-label="项目符号"><BulletsIcon /></Tool>
                    <Drop />
                    <Tool aria-label="编号"><NumbersIcon /></Tool>
                    <Drop />
                    <Tool aria-label="多级列表"><MultiLevelIcon /></Tool>
                    <Drop />
                    <ToolSep />
                    <Tool aria-label="减少缩进"><IndentIcon /></Tool>
                    <Tool aria-label="增加缩进"><IndentIcon inward /></Tool>
                    <ToolSep />
                    <Tool aria-label="字符缩放"><ScaleIcon /></Tool>
                    <Drop />
                    <ToolSep />
                    <Tool aria-label="制表位"><TabStopIcon /></Tool>
                    <ToolSep />
                    <Tool aria-label="排序"><SortIcon /></Tool>
                  </ToolRow>
                  <ToolRow>
                    {alignments.map((a) => (
                      <Tool key={a.label} aria-label={a.label} $on={a.on}><AlignIcon lines={a.lines} /></Tool>
                    ))}
                    <Tool aria-label="分散对齐"><DistributeIcon /></Tool>
                    <ToolSep />
                    <Tool aria-label="行距"><SpacingIcon /></Tool>
                    <Drop />
                    <ToolSep />
                    <Tool aria-label="底纹"><BucketIcon /></Tool>
                    <Tool aria-label="边框"><BordersIcon /></Tool>
                    <ToolSep />
                    <Tool aria-label="显示编辑标记"><PilcrowIcon /></Tool>
                  </ToolRow>
                </ToolRows>
                <GroupFooter><span>段落</span><Launcher /></GroupFooter>
              </Group>

              <Group $w={562} $grow>
                <StylesBody>
                  <Gallery>
                    {styleCards.map((s) => (
                      <StyleCard key={s.name + (s.no ?? "")}>
                        <Sample $size={s.size} $h={s.h} $bold={s.bold} $sans={s.sans}>{s.sample}</Sample>
                        <StyleName>
                          <Dot /><Dot />{s.name}
                          {s.no && <><Dot />{s.no}</>}
                          {(s.no || s.mark) && <ReturnMark />}
                        </StyleName>
                      </StyleCard>
                    ))}
                  </Gallery>
                  <GalleryScroll>
                    <GalleryStep aria-label="上一行"><Caret dir="up" fill="#b5b8bc" /></GalleryStep>
                    <GalleryStep aria-label="下一行"><Caret fill="#b5b8bc" /></GalleryStep>
                    <GalleryStep aria-label="更多样式"><CustomizeIcon /></GalleryStep>
                  </GalleryScroll>
                  <TallButton $w={56}>
                    <ChangeStylesIcon />
                    更改样式
                  </TallButton>
                  <TallButton $w={60}>
                    <StyleManagerIcon />
                    样式管理器
                  </TallButton>
                </StylesBody>
                <GroupFooter><span>样式</span></GroupFooter>
              </Group>
            </RibbonGroups>
            <RibbonScroller aria-label="向右滚动"><Caret dir="right" /></RibbonScroller>
          </Ribbon>

          <Body>
            <Editor>
              <RulerRow>
                <RulerCorner aria-label="制表符">
                  <svg width="9" height="9" fill="#e8ebef" stroke="#8a929c">
                    <path d="M.5 1.500h8v2h-1L4.500 7.500l-3-4h-1z" />
                  </svg>
                </RulerCorner>
                <Ruler>
                  <RulerTicks>
                    {horizontalTicks.map((n, i) => <span key={i}>{n || ""}</span>)}
                  </RulerTicks>
                  <RulerMarker $x={116} $y={-4} width="10" height="22" fill="#eef1f6" stroke="#8c93a5">
                    <path d="M.5 1h8.500v2L5 7.500.5 3zM5 7.500L9 12v2H.5v-2z" />
                    <path d="M.5 14h8.500v6.500H.5z" fill="#b9c1cf" />
                  </RulerMarker>
                  <RulerMarker $x={669} $y={2} width="10" height="10" fill="#e6e9ee" stroke="#8c93a5">
                    <path d="M.5 9V6.500L5 1.500l4 5V9z" />
                  </RulerMarker>
                </Ruler>
              </RulerRow>

              <PageRow>
                <VerticalRuler>
                  <VerticalTicks>
                    {verticalTicks.map((n, i) => <span key={i}>{n || ""}</span>)}
                  </VerticalTicks>
                </VerticalRuler>
                <Canvas>
                  <Page>
                    <CropMarks><CropMark /><CropMark $right /></CropMarks>
                    <Paragraph><ReturnMark /></Paragraph>
                  </Page>
                </Canvas>
              </PageRow>

              <BottomRow>
                <ViewButtons>
                  <ViewButton aria-label="普通视图">
                    <svg width="11" height="12"><path d="M1 1h9v1H1zM0 4h11v1H0zM0 7h11v1H0zM0 10h11v1H0z" /></svg>
                  </ViewButton>
                  <ViewButton aria-label="页面视图" $on>
                    <svg width="11" height="12" shapeRendering="crispEdges">
                      <path d="M.5.5h9v10h-9z" fill="#d3e6fb" stroke="#1d2f50" />
                      <path d="M2 3.500h6M2 5.500h6M2 7.500h6" stroke="#5e8fd0" />
                    </svg>
                  </ViewButton>
                  <ViewButton aria-label="大纲视图">
                    <svg width="11" height="12"><path d="M0 1h10v1H0zM3 4h8v1H3zM5 7h6v1H5zM5 10h6v1H5zM1 4h1v1H1zM3 7h1v1H3z" /></svg>
                  </ViewButton>
                  <ViewButton aria-label="阅读视图">
                    <svg width="12" height="12" fill="#fff" stroke="#222">
                      <path d="M.5 1.500h4L6 2.500l1.500-1h4v8h-4L6 11 4.500 9.500h-4zM6 2.500V11M2 4.500h2M2 6.500h2M8 4.500h2M8 6.500h2" />
                    </svg>
                  </ViewButton>
                </ViewButtons>
                <BarButton aria-label="向左滚动"><Caret dir="left" /></BarButton>
                <HorizontalThumb />
                <BarButton aria-label="向右滚动"><Caret dir="right" /></BarButton>
              </BottomRow>
            </Editor>

            <VerticalBar>
              <SplitHandle />
              <BarButton aria-label="向上滚动"><Caret dir="up" /></BarButton>
              <VerticalThumb />
              <VerticalTrack />
              <BarButton aria-label="向下滚动"><Caret /></BarButton>
              <BrowseButton aria-label="上一页">
                <svg width="9" height="9" fill="none" stroke="#1c5fa8"><path d="M1 4.500h7L4.500 1zM1 8.500h7L4.500 5z" /></svg>
              </BrowseButton>
              <BrowseButton aria-label="选择浏览对象">
                <svg width="9" height="9"><circle cx="4.500" cy="4.500" r="3.800" fill="#3b87e6" stroke="#1d5cb8" /><path d="M2 2.500h4v2H2z" fill="#a9d0fa" /></svg>
              </BrowseButton>
              <BrowseButton aria-label="下一页">
                <svg width="9" height="9" fill="none" stroke="#1b4be0"><path d="M1 .5h7L4.500 4zM1 4.500h7L4.500 8z" /></svg>
              </BrowseButton>
            </VerticalBar>

            <Splitter>
              <SplitterGrip aria-label="折叠任务窗格"><Caret dir="right" /></SplitterGrip>
            </Splitter>

            <Pane>
              <PaneTitle>
                <GripDots />
                <PaneHeading>开始工作</PaneHeading>
                <IconButton aria-label="窗格菜单" $w={16}>
                  <svg width="8" height="5"><path d="M0 0h8L4 4.500z" /></svg>
                </IconButton>
                <IconButton aria-label="关闭窗格" $w={14}><Cross /></IconButton>
              </PaneTitle>
              <PaneTools>
                <IconButton aria-label="后退" $w={16}><GreyDisc /></IconButton>
                <IconButton aria-label="前进" $w={16}><GreyDisc flip /></IconButton>
                <IconButton aria-label="主页" $w={16}><HomeIcon /></IconButton>
              </PaneTools>
              <PaneSectionBack>
                <PaneSection>
                  <span>打开</span>
                  <PaneLink href="#history"><span><Mixed text="管理记录..." /></span></PaneLink>
                </PaneSection>
              </PaneSectionBack>
              <PaneLinks>
                <PaneLink href="#open"><FolderIcon /><span><Mixed text="打开..." /></span></PaneLink>
                <PaneLink href="#new"><NewDocIcon /><span><Mixed text="新建..." /></span></PaneLink>
              </PaneLinks>
            </Pane>
          </Body>

          <StatusBar>
            <Counters $w={200}>
              <StatusField $w={58}><Mixed text="1 页" /></StatusField>
              <StatusField $w={62}><Mixed text="1 节" /></StatusField>
              <StatusField><Mixed text="1/1" /></StatusField>
            </Counters>
            <Position $w={257}>
              <StatusField $w={146}><Mixed text="位置 : 2.59 厘米" /></StatusField>
              <StatusField $w={50}><Mixed text="1 行" /></StatusField>
              <StatusField><Mixed text="1 列" /></StatusField>
            </Position>
            <Centered $w={38} $muted>改写</Centered>
            <Centered $w={38} $muted>修订</Centered>
            <Centered $w={81}>拼写检查</Centered>
            <StatusCell />
            <Zoom>
              <ZoomValue htmlFor="zoom"><Mixed text="100%" /></ZoomValue>
              <IconButton aria-label="缩小" $w={17}><ZoomIcon /></IconButton>
              <ZoomSlider id="zoom" type="range" aria-label="显示比例" min={0} max={200} defaultValue={100} />
              <IconButton aria-label="放大" $w={17}><ZoomIcon plus /></IconButton>
            </Zoom>
          </StatusBar>
        </Workspace>
      </Frame>
    </>
  );
}
